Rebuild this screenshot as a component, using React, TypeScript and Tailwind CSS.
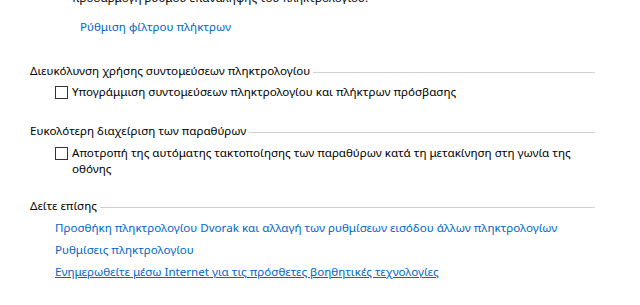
import type { ReactNode } from "react";

const font = { fontFamily: '"Noto Sans", "Liberation Sans", sans-serif' };

function Heading({ children, className = "" }: { children: ReactNode; className?: string }) {
  return (
    <div className={`flex items-center ${className}`}>
      <span className="whitespace-nowrap">{children}</span>
      <div className="ml-[3px] mt-[2px] h-px flex-1 bg-[#d0d0d0]" />
    </div>
  );
}

function Check({ children, className = "" }: { children: ReactNode; className?: string }) {
  return (
    <label className={`flex items-start pl-[25px] ${className}`}>
      <span className="mt-[2px] h-[13px] w-[13px] shrink-0 border border-[#333333] bg-white" />
      <span className="ml-[4px]">{children}</span>
    </label>
  );
}

export default function App() {
  return (
    <div style={font} className="h-[305px] w-[640px] overflow-hidden bg-white text-[11.6px] leading-[16px] text-black">
      <div className="pl-[30px] pr-[45px]">
        <p className="-mt-[10px] pl-[42px]">προσαρμογή ρυθμού επανάληψης του πληκτρολογίου.</p>
        <a className="mt-[13px] block pl-[50px] text-[#0066cc]">Ρύθμιση φίλτρου πλήκτρων</a>

        <Heading className="mt-[28px]">Διευκόλυνση χρήσης συντομεύσεων πληκτρολογίου</Heading>
        <Check className="mt-[5px]">Υπογράμμιση συντομεύσεων πληκτρολογίου και πλήκτρων πρόσβασης</Check>

        <Heading className="mt-[23px]">Ευκολότερη διαχείριση των παραθύρων</Heading>
        <Check className="mt-[6px] pr-[10px]">
          Αποτροπή της αυτόματης τακτοποίησης των παραθύρων κατά τη μετακίνηση στη γωνία της οθόνης
        </Check>

        <Heading className="mt-[21px]">Δείτε επίσης</Heading>
        <div className="mt-[6px] flex flex-col gap-[6px] pl-[25px] text-[#0066cc]">
          <a>Προσθήκη πληκτρολογίου Dvorak και αλλαγή των ρυθμίσεων εισόδου άλλων πληκτρολογίων</a>
          <a>Ρυθμίσεις πληκτρολογίου</a>
          <a className="underline">Ενημερωθείτε μέσω Internet για τις πρόσθετες βοηθητικές τεχνολογίες</a>
        </div>
      </div>
    </div>
  );
}
